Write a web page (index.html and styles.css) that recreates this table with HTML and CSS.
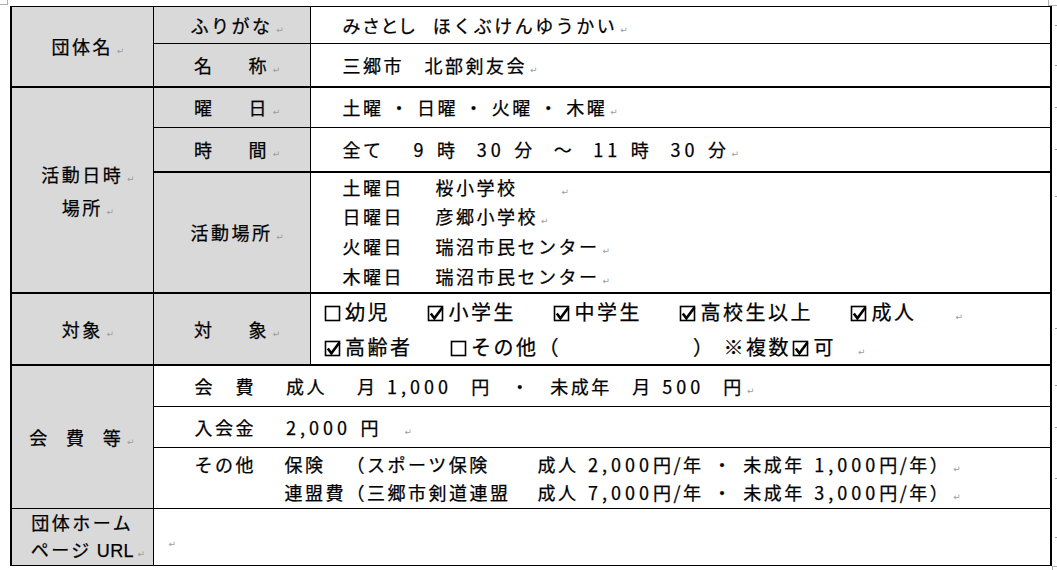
FILE: index.html
```html
<!DOCTYPE html>
<html lang="ja">
<head>
<meta charset="utf-8">
<title>団体情報</title>
<link rel="stylesheet" href="styles.css">
</head>
<body>
<svg class="defs" aria-hidden="true">
  <symbol id="cb-off" viewBox="0 0 20 20"><rect x="2.5" y="3.5" width="14" height="14" fill="none" stroke="#000" stroke-width="1.6"/></symbol>
  <symbol id="cb-on" viewBox="0 0 20 20"><rect x="2.5" y="3.5" width="14" height="14" fill="none" stroke="#000" stroke-width="1.6"/><path d="M4.8 10.4 L8.4 15.3 L16.4 4.4" fill="none" stroke="#000" stroke-width="2.6"/></symbol>
</svg>
<div class="page">
  <span class="crop crop-tl"></span>
  <span class="crop crop-tr"></span>
  <span class="crop crop-br"></span>
  <table class="sheet">
    <colgroup><col class="c1"><col class="c2"><col class="c3"><col class="c4"></colgroup>
    <tbody>
      <tr class="r1">
        <th class="lead" rowspan="2">団体名<span class="pm hang">↵</span></th>
        <th>ふりがな<span class="pm hang">↵</span></th>
        <td class="cell val"><span class="v"><span class="palt">みさとし</span> ほくぶけんゆうかい</span><span class="pm">↵</span></td>
        <td class="end"><span class="eol"></span></td>
      </tr>
      <tr class="r2">
        <th><span class="spread"><span>名</span><span>称</span></span><span class="pm hang">↵</span></th>
        <td class="cell val"><span class="v">三郷市　北部剣友会</span><span class="pm">↵</span></td>
        <td class="end"><span class="eol"></span></td>
      </tr>
      <tr class="r3 thick">
        <th class="lead" rowspan="3"><div class="stack">活動日時<span class="pm hang">↵</span><br>場所<span class="pm hang">↵</span></div></th>
        <th><span class="spread"><span>曜</span><span>日</span></span><span class="pm hang">↵</span></th>
        <td class="cell val"><span class="v tight">土曜 ・ 日曜 ・ 火曜 ・ 木曜</span><span class="pm">↵</span></td>
        <td class="end"><span class="eol"></span></td>
      </tr>
      <tr class="r4">
        <th><span class="spread"><span>時</span><span>間</span></span><span class="pm hang">↵</span></th>
        <td class="cell val"><span class="v">全て　 <span class="n">9</span> 時  <span class="n">30</span> 分  ～  <span class="n">11</span> 時  <span class="n">30</span> 分</span><span class="pm">↵</span></td>
        <td class="end"><span class="eol"></span></td>
      </tr>
      <tr class="r5 thick">
        <th>活動場所<span class="pm hang">↵</span></th>
        <td class="cell val places">
          <div class="pl"><span class="day">土曜日</span><span class="v">桜小学校　　</span><span class="pm">↵</span></div>
          <div class="pl"><span class="day">日曜日</span><span class="v">彦郷小学校</span><span class="pm">↵</span></div>
          <div class="pl"><span class="day">火曜日</span><span class="v">瑞沼市民センター</span><span class="pm">↵</span></div>
          <div class="pl"><span class="day">木曜日</span><span class="v">瑞沼市民センター</span><span class="pm">↵</span></div>
        </td>
        <td class="end top"><span class="eol"></span></td>
      </tr>
      <tr class="r6 thick">
        <th class="lead">対象<span class="pm hang">↵</span></th>
        <th><span class="spread"><span>対</span><span>象</span></span><span class="pm hang">↵</span></th>
        <td class="cell targets">
          <div class="chk-line">
            <span class="opt"><svg class="cb"><use href="#cb-off"/></svg>幼児</span>
            <span class="opt"><svg class="cb"><use href="#cb-on"/></svg>小学生</span>
            <span class="opt"><svg class="cb"><use href="#cb-on"/></svg>中学生</span>
            <span class="opt"><svg class="cb"><use href="#cb-on"/></svg>高校生以上</span>
            <span class="opt"><svg class="cb"><use href="#cb-on"/></svg>成人</span>
            <span class="pm">↵</span>
          </div>
          <div class="chk-line">
            <span class="opt"><svg class="cb"><use href="#cb-on"/></svg>高齢者</span>
            <span class="opt"><svg class="cb"><use href="#cb-off"/></svg>その他（<span class="blank"></span>）<span class="note">※複数<svg class="cb"><use href="#cb-on"/></svg>可</span></span>
            <span class="pm pull">↵</span>
          </div>
        </td>
        <td class="end"><span class="eol"></span></td>
      </tr>
      <tr class="r7 thick">
        <th class="lead" rowspan="3"><span class="spread wide"><span>会</span><span>費</span><span>等</span></span><span class="pm">↵</span></th>
        <td class="cell merged" colspan="2"><span class="v">会　費　 成人　 月 <span class="n">1,000</span>  円  ・  未成年　月 <span class="n">500</span>  円</span><span class="pm">↵</span></td>
        <td class="end"><span class="eol"></span></td>
      </tr>
      <tr class="r8">
        <td class="cell merged" colspan="2"><span class="v">入会金　 <span class="n">2,000</span> 円　</span><span class="pm">↵</span></td>
        <td class="end"><span class="eol"></span></td>
      </tr>
      <tr class="r9">
        <td class="cell merged" colspan="2">
          <div class="fees">
            <span>その他</span><span>保険</span><span>（スポーツ保険</span><span class="v">成人 <span class="n">2,000</span>円/年 ・ 未成年 <span class="n">1,000</span>円/年）<span class="pm">↵</span></span>
            <span></span><span>連盟費</span><span>（三郷市剣道連盟</span><span class="v">成人 <span class="n">7,000</span>円/年 ・ 未成年 <span class="n">3,000</span>円/年）<span class="pm">↵</span></span>
          </div>
        </td>
        <td class="end"><span class="eol"></span></td>
      </tr>
      <tr class="r10">
        <th class="lead"><div class="stack url">団体ホーム<br>ページ<span class="latin">URL</span><span class="pm hang">↵</span></div></th>
        <td class="cell merged blank-cell" colspan="2"><span class="pm">↵</span></td>
        <td class="end"><span class="eol"></span></td>
      </tr>
    </tbody>
  </table>
</div>
</body>
</html>
```

FILE: styles.css
```css
* { box-sizing: border-box; }

html, body {
  margin: 0;
  padding: 0;
  background: #fff;
}

body {
  font-family: "Noto Sans CJK JP", "Noto Sans", sans-serif;
  font-size: 18px;
  letter-spacing: 2.5px;
  word-spacing: 3px;
  color: #000;
  -webkit-text-stroke: 0.25px #000;
}

.defs {
  position: absolute;
  width: 0;
  height: 0;
  overflow: hidden;
}

.page {
  position: relative;
  width: 1057px;
  height: 570px;
  padding: 6px 0 0 10px;
  overflow: hidden;
}

.crop {
  position: absolute;
  border: 0 solid #b0b0b0;
}
.crop-tl { left: 0; top: 0; width: 8px; height: 5px; border-right-width: 1px; border-bottom-width: 1px; }
.crop-tr { left: 1048px; top: 0; width: 9px; height: 6px; border-left-width: 1px; border-bottom-width: 1px; }
.crop-br { left: 1052px; top: 566px; width: 5px; height: 4px; border-left-width: 1px; border-top-width: 1px; }

.sheet {
  border-collapse: collapse;
  table-layout: fixed;
  width: 1047px;
}
.c1 { width: 142px; }
.c2 { width: 157px; }
.c3 { width: 741px; }
.c4 { width: 6px; }

.sheet th,
.sheet .cell {
  border: 1px solid #000;
  padding: 0;
  vertical-align: middle;
  line-height: 24px;
  font-weight: 400;
}
.sheet th {
  background: #d9d9d9;
  text-align: center;
}
.sheet th.lead { border-left-width: 2px; }
.sheet .cell {
  text-align: left;
  border-right-width: 2px;
}
.sheet .thick > th,
.sheet .thick > .cell { border-top-width: 2px; }

.r1 { height: 37px; }
.r2 { height: 43px; }
.r3 { height: 41px; }
.r4 { height: 44px; }
.r5 { height: 121px; }
.r6 { height: 72px; }
.r7 { height: 42px; }
.r8 { height: 41px; }
.r9 { height: 61px; }
.r10 { height: 55px; }

.v { white-space: pre; }
.v.tight { word-spacing: 0; }
.palt { font-feature-settings: "palt"; margin-right: 6px; }
.n { letter-spacing: 4px; }

.pm {
  display: inline-block;
  width: 9px;
  margin-left: 3px;
  font-family: "DejaVu Sans", sans-serif;
  font-size: 9px;
  line-height: 1;
  letter-spacing: 0;
  color: #9c9c9c;
  -webkit-text-stroke: 0;
}
.pm.hang { margin-right: -12px; }

.spread {
  display: inline-flex;
  justify-content: space-between;
  width: 75px;
}
.spread.wide { width: 94px; }

.stack { line-height: 33px; padding-top: 2px; }
.stack.url { line-height: 27px; padding-top: 0; white-space: nowrap; }
.latin {
  font-family: "Liberation Sans", Arial, sans-serif;
  letter-spacing: 0.3px;
  margin-left: 5px;
}

.sheet .val { padding-left: 32px; }
.sheet .merged { padding-left: 41px; }
.sheet .blank-cell { padding-left: 12px; padding-top: 4px; }

.sheet .places { line-height: 29.7px; }
.pl { display: flex; align-items: baseline; line-height: 29.7px; white-space: nowrap; }
.day { width: 93px; flex: none; }

.sheet .targets {
  padding-left: 12px;
  font-size: 20px;
}
.chk-line {
  display: flex;
  align-items: baseline;
  column-gap: 36px;
  line-height: 35px;
}
.opt { white-space: nowrap; }
.cb {
  width: 20px;
  height: 20px;
  margin-right: 2.5px;
  vertical-align: -3px;
}
.blank { display: inline-block; width: 132px; }
.note { margin-left: 8px; }
.pm.pull { margin-left: -14px; }

.fees {
  display: grid;
  grid-template-columns: 90px 62px 191px auto;
  line-height: 28px;
  white-space: nowrap;
}

.end {
  border: none;
  padding: 0 0 0 3px;
  vertical-align: middle;
}
.end.top { vertical-align: top; padding-top: 24px; }
.eol {
  display: block;
  width: 2px;
  height: 1px;
  background: #9c9c9c;
}
```
